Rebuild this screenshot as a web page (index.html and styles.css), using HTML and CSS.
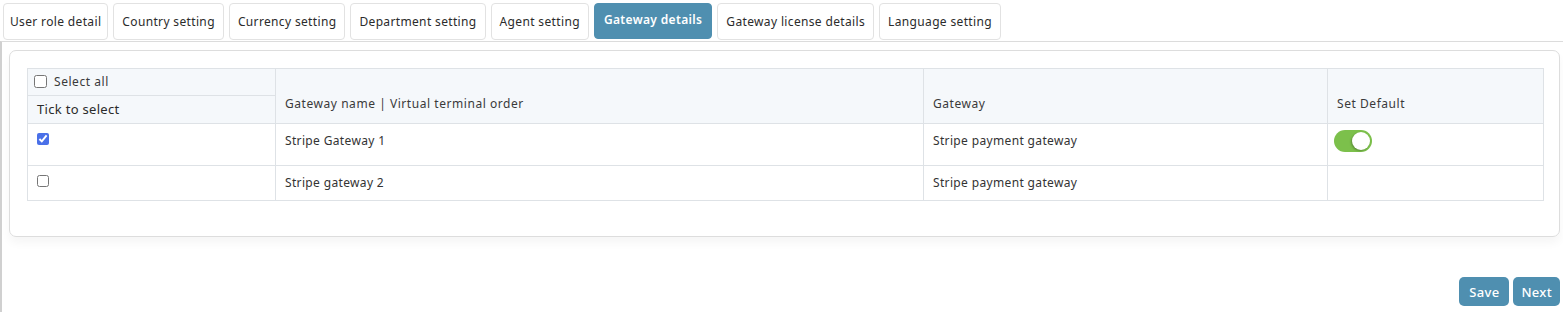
FILE: index.html
```html
<!DOCTYPE html>
<html>
<head>
<meta charset="utf-8">
<link rel="stylesheet" href="styles.css">
</head>
<body>
<nav class="tabs">
  <a class="tab">User role detail</a>
  <a class="tab">Country setting</a>
  <a class="tab">Currency setting</a>
  <a class="tab">Department setting</a>
  <a class="tab">Agent setting</a>
  <a class="tab active">Gateway details</a>
  <a class="tab">Gateway license details</a>
  <a class="tab">Language setting</a>
</nav>
<main class="panel">
  <section class="card">
    <table class="grid">
      <colgroup>
        <col class="c1"><col class="c2"><col class="c3"><col class="c4">
      </colgroup>
      <thead>
        <tr>
          <th class="sel-all"><label><input type="checkbox"> <span>Select all</span></label></th>
          <th rowspan="2" class="hbottom">Gateway name | Virtual terminal order</th>
          <th rowspan="2" class="hbottom">Gateway</th>
          <th rowspan="2" class="hbottom">Set Default</th>
        </tr>
        <tr>
          <th class="tick">Tick to select</th>
        </tr>
      </thead>
      <tbody>
        <tr class="r1">
          <td><input type="checkbox" checked></td>
          <td>Stripe Gateway 1</td>
          <td>Stripe payment gateway</td>
          <td class="tog-cell"><span class="toggle on"><span class="knob"></span></span></td>
        </tr>
        <tr class="r2">
          <td><input type="checkbox"></td>
          <td>Stripe gateway 2</td>
          <td>Stripe payment gateway</td>
          <td></td>
        </tr>
      </tbody>
    </table>
  </section>
  <div class="actions">
    <button class="btn">Save</button>
    <button class="btn next">Next</button>
  </div>
</main>
</body>
</html>
```
FILE: styles.css
```css
* { box-sizing: border-box; }
html, body { margin: 0; padding: 0; background: #fff; }
body {
  font-family: "Noto Sans", "Open Sans", sans-serif;
  color: #333;
  font-size: 12px;
  letter-spacing: 0.35px;
  width: 1563px;
  height: 312px;
  overflow: hidden;
}
.tabs {
  display: flex;
  gap: 5px;
  padding: 3px 0 0 3px;
  height: 41px;
}
.tab {
  display: flex;
  align-items: center;
  height: 37px;
  padding: 0 8px;
  border: 1px solid #e2e2e2;
  border-radius: 4px;
  font-size: 12px;
  letter-spacing: 0.35px;
  color: #2b2b2b;
  white-space: nowrap;
}
.tab:nth-child(1) { padding: 0 6px; }
.tab.active {
  background: #4f8fb0;
  border-color: #4f8fb0;
  color: #fff;
  font-weight: 600;
  height: 36px;
  padding: 0 9px 3px;
}
.panel {
  border-top: 1px solid #dcdcdc;
  border-left: 2px solid #d0d0d0;
  padding: 8px 3px 0 7px;
  height: 271px;
}
.card {
  border: 1px solid #dddddd;
  border-radius: 7px;
  padding: 17px 16px 35px 17px;
  box-shadow: 0 6px 10px rgba(0,0,0,0.04);
}
.grid {
  width: 1516px;
  border-collapse: collapse;
  table-layout: fixed;
}
.c1 { width: 248px; }
.c2 { width: 648px; }
.c3 { width: 404px; }
.c4 { width: 216px; }
.grid th, .grid td {
  border: 1px solid #dee2e6;
  text-align: left;
  font-weight: 400;
  padding: 9px 9px 10px;
  line-height: 15px;
  vertical-align: top;
}
.grid th {
  background: #f5f8fb;
  color: #3a3a3a;
  letter-spacing: 0.55px;
}
.grid th.sel-all {
  height: 27px;
  padding: 5px 6px;
  font-size: 12px;
}
.sel-all label { display: flex; align-items: center; gap: 7px; }
.sel-all input { margin: 0; width: 13px; height: 13px; }
.grid th.tick {
  height: 28px;
  padding: 6px 9px;
  font-size: 13px;
  letter-spacing: 0.3px;
  color: #2b2b2b;
}
.grid th.hbottom {
  vertical-align: bottom;
  padding-bottom: 12px;
}
.grid td { color: #333; }
.grid td input { margin: 0; width: 12px; height: 12px; accent-color: #4a70e8; }
.grid tr.r1 td { height: 42px; }
.grid tr.r2 td { height: 35px; }
.grid td.tog-cell { padding: 6px 6px 0; }
.toggle {
  display: block;
  width: 38px;
  height: 22px;
  border-radius: 11px;
  background: #7cc04b;
  position: relative;
}
.knob {
  position: absolute;
  top: 2px;
  right: 2px;
  width: 18px;
  height: 18px;
  border-radius: 50%;
  background: #fff;
  box-shadow: -1px 1px 2px rgba(0,0,0,0.25);
}
.actions {
  display: flex;
  justify-content: flex-end;
  gap: 4px;
  margin-top: 40px;
}
.btn {
  font-family: inherit;
  font-size: 13px;
  font-weight: 500;
  letter-spacing: 0.3px;
  color: #fff;
  background: #4f8fb0;
  border: none;
  border-radius: 5px;
  height: 29px;
  padding: 0 10px;
}
.btn.next { padding: 0 8px; }
```
